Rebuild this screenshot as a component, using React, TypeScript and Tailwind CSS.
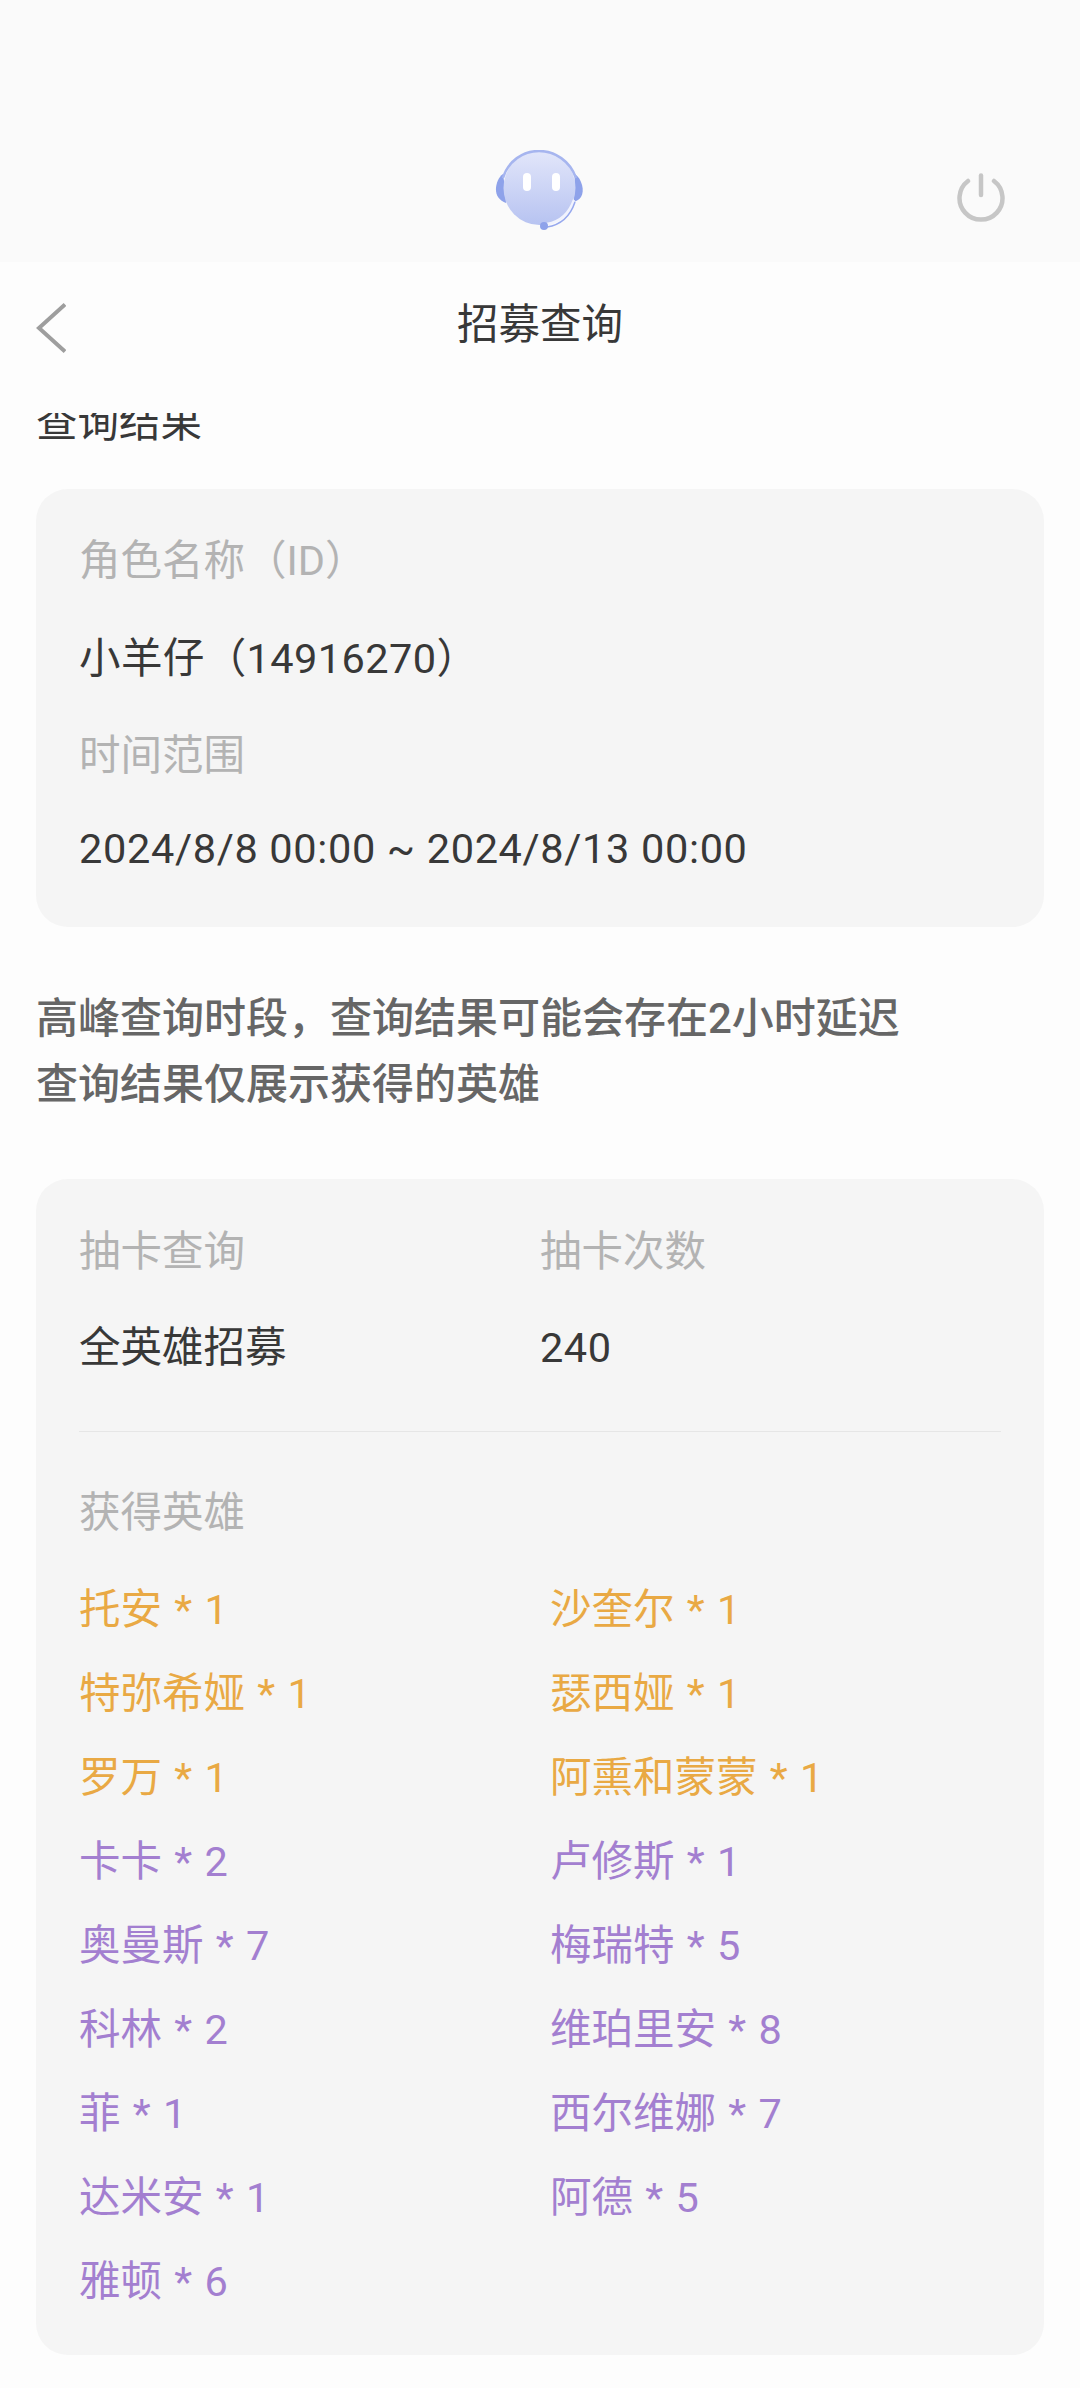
const CJK = "font-['Roboto','Noto_Sans_CJK_SC',sans-serif]";

const gold = "text-[#e9a944]";
const purple = "text-[#a37fd0]";

const heroes = [
  { left: "托安 * 1", right: "沙奎尔 * 1", color: gold },
  { left: "特弥希娅 * 1", right: "瑟西娅 * 1", color: gold },
  { left: "罗万 * 1", right: "阿熏和蒙蒙 * 1", color: gold },
  { left: "卡卡 * 2", right: "卢修斯 * 1", color: purple },
  { left: "奥曼斯 * 7", right: "梅瑞特 * 5", color: purple },
  { left: "科林 * 2", right: "维珀里安 * 8", color: purple },
  { left: "菲 * 1", right: "西尔维娜 * 7", color: purple },
  { left: "达米安 * 1", right: "阿德 * 5", color: purple },
  { left: "雅顿 * 6", right: "", color: purple },
];

function Robot() {
  return (
    <svg width="90" height="80" viewBox="0 0 90 80" fill="none">
      <defs>
        <linearGradient id="face" x1="0" y1="0" x2="0" y2="1">
          <stop offset="0" stopColor="#e2e6fa" />
          <stop offset="1" stopColor="#b7c3f1" />
        </linearGradient>
      </defs>
      {/* ear cups */}
      <path d="M8 24 C1 29 -1 41 3 47 C5 50 8 52 11 53 L10 38 Z" fill="#8ea2ea" />
      <path d="M80 24 C87 29 90 41 86 47 C84 50 81 51 79 52 L79 38 Z" fill="#8ea2ea" />
      <ellipse cx="44.5" cy="38" rx="36" ry="37" fill="url(#face)" />
      {/* headband */}
      <path d="M8 28 C13 11 28 1 44 1 C60 1 75 11 81 28" stroke="#a6b5ef" strokeWidth="2.5" />
      <rect x="28" y="23" width="8" height="18" rx="4" fill="#ffffff" />
      <rect x="57" y="23" width="8" height="18" rx="4" fill="#ffffff" />
      {/* mic arm */}
      <path d="M79 50 C74 64 64 72 52 74" stroke="#f1f3fd" strokeWidth="2.5" />
      <path d="M80 52 C75 67 65 75 52 77" stroke="#96a8ee" strokeWidth="1.5" />
      <circle cx="49" cy="76" r="4" fill="#8ea2ea" />
    </svg>
  );
}

function Power() {
  return (
    <svg width="48" height="49" viewBox="0 0 48 49" fill="none" stroke="#c6c6c6" strokeWidth="4.5" strokeLinecap="round">
      <path d="M24 2.5 V22" />
      <path d="M11 8 A21.5 21.5 0 1 0 37 8" />
    </svg>
  );
}

function Back() {
  return (
    <svg width="30" height="50" viewBox="0 0 30 50" fill="none" stroke="#9e9e9e" strokeWidth="4">
      <path d="M29 1.5 L3 25 L29 48.5" />
    </svg>
  );
}

export default function App() {
  return (
    <div className={`w-[1080px] h-[2388px] overflow-hidden bg-[#fdfdfd] flex flex-col ${CJK}`}>
      {/* status + top bar */}
      <div className="h-[262px] shrink-0 bg-[#fafafa] relative flex items-end justify-center pb-[32px]">
        <Robot />
        <div className="absolute left-[957px] top-[173px]">
          <Power />
        </div>
      </div>

      {/* nav */}
      <div className="h-[151px] shrink-0 relative flex items-center justify-center">
        <div className="absolute left-[36px] top-[41px]">
          <Back />
        </div>
        <span className="text-[41.5px] leading-[60px] text-[#383838] mb-[26px]">招募查询</span>
      </div>

      {/* scrolled content, heading clipped by the nav */}
      <div className="flex-1 overflow-hidden px-[36px]">
        <div className="text-[41.5px] leading-[60px] text-[#383838] mt-[-20px] h-[96px]">查询结果</div>

        <div className="bg-[#f5f5f5] rounded-[32px] h-[438px] px-[43px] pt-[40px] text-[41.5px] leading-[64px]">
          <div className="text-[#b3b3b3]">角色名称（ID）</div>
          <div className="text-[#383838] mt-[34px] tracking-[0.4px]">小羊仔（14916270）</div>
          <div className="text-[#b3b3b3] mt-[33px]">时间范围</div>
          <div className="text-[#383838] mt-[29px] tracking-[0.65px]">2024/8/8 00:00 ~ 2024/8/13 00:00</div>
        </div>

        <div className="mt-[59px] text-[42px] leading-[66px] text-[#666666] font-medium">
          <div>高峰查询时段，查询结果可能会存在2小时延迟</div>
          <div>查询结果仅展示获得的英雄</div>
        </div>

        <div className="mt-[61px] bg-[#f5f5f5] rounded-[32px] h-[1176px] px-[43px] pt-[41px] text-[41.5px] leading-[64px]">
          <div className="flex text-[#b3b3b3]">
            <div className="w-[461px]">抽卡查询</div>
            <div>抽卡次数</div>
          </div>
          <div className="flex text-[#383838] mt-[32px]">
            <div className="w-[461px]">全英雄招募</div>
            <div className="tracking-[0.5px]">240</div>
          </div>
          <div className="h-px bg-[#e6e6e6] mt-[51px]" />
          <div className="text-[#b3b3b3] mt-[49px]">获得英雄</div>
          <div className="mt-[23px] flex flex-col">
            {heroes.map((h) => (
              <div key={h.left} className={`flex h-[84px] items-center [word-spacing:2px] ${h.color}`}>
                <div className="w-[471px]">{h.left}</div>
                <div>{h.right}</div>
              </div>
            ))}
          </div>
        </div>
      </div>
    </div>
  );
}
